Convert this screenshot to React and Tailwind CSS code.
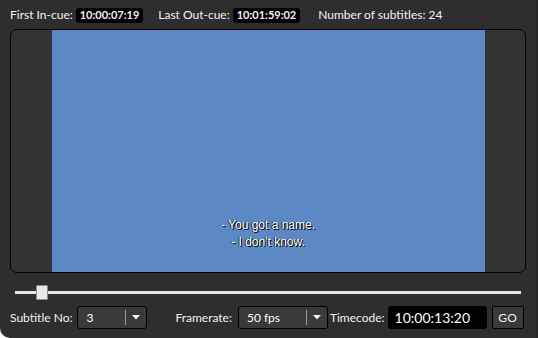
import React from 'react';

const Combo = ({ value, width }) => (
  <div className={`flex items-stretch h-[23px] bg-[#3a3a3a] border border-black rounded-[3px] ${width}`}>
    <div className="flex-1 flex items-center pl-[8px] text-[12px] text-white">{value}</div>
    <div className="w-px my-[3px] bg-[#9a9a9a]" />
    <div className="w-[20px] flex items-center justify-center">
      <svg width="8" height="5" viewBox="0 0 8 5"><path d="M0 0h8L4 4.5z" fill="#f0f0f0" /></svg>
    </div>
  </div>
);

const App = () => {
  return (
    <div className="w-[538px] h-[338px] bg-[#2e2e2e] text-[#f2f2f2] font-['Lato','Open_Sans',sans-serif] text-[12px] overflow-hidden rounded-bl-[10px] border-r-[2px] border-[#262626] flex flex-col">
      <div className="flex items-center h-[29px] pl-[10px] pt-[1px]">
        <span>First In-cue:</span>
        <span className="ml-[3px] bg-black rounded-[3px] px-[4px] h-[15px] flex items-center text-[11px] font-bold">10:00:07:19</span>
        <span className="ml-[15px]">Last Out-cue:</span>
        <span className="ml-[3px] bg-black rounded-[3px] px-[4px] h-[15px] flex items-center text-[11px] font-bold">10:01:59:02</span>
        <span className="ml-[18px]">Number of subtitles: 24</span>
      </div>

      <div className="mx-[10px] w-[516px] h-[244px] border border-black rounded-[7px] bg-[#333333] flex justify-center overflow-hidden">
        <div className="w-[433px] h-full bg-[#5c89c4] flex flex-col items-center justify-end pb-[21px] text-white text-[12px] leading-[17px] font-['Liberation_Sans',sans-serif] [text-shadow:1px_1px_0_#000,-1px_0_0_#222]">
          <span>- You got a name.</span>
          <span>- I don't know.</span>
        </div>
      </div>

      <div className="relative mx-[15px] mt-[11px] h-[16px] flex items-center">
        <div className="w-full h-[3px] bg-[#e6e6e6]" />
        <div className="absolute left-[21px] top-[1px] w-[12px] h-[15px] bg-[#e8e8e8] border border-[#8a8a8a] rounded-[1px]" />
      </div>

      <div className="flex items-center pl-[10px] mt-[6px]">
        <span>Subtitle No:</span>
        <div className="ml-[5px]"><Combo value="3" width="w-[70px]" /></div>
        <span className="ml-[28px]">Framerate:</span>
        <div className="ml-[6px]"><Combo value="50 fps" width="w-[90px]" /></div>
        <span className="ml-[2px]">Timecode:</span>
        <div className="ml-[3px] w-[99px] h-[23px] bg-black rounded-[3px] flex items-center pl-[7px] text-[14px] text-white">10:00:13:20</div>
        <div className="ml-[5px] w-[32px] h-[23px] bg-[#3a3a3a] border border-black rounded-[2px] flex items-center justify-center text-[12px]">GO</div>
      </div>
    </div>
  );
};

export default App;
